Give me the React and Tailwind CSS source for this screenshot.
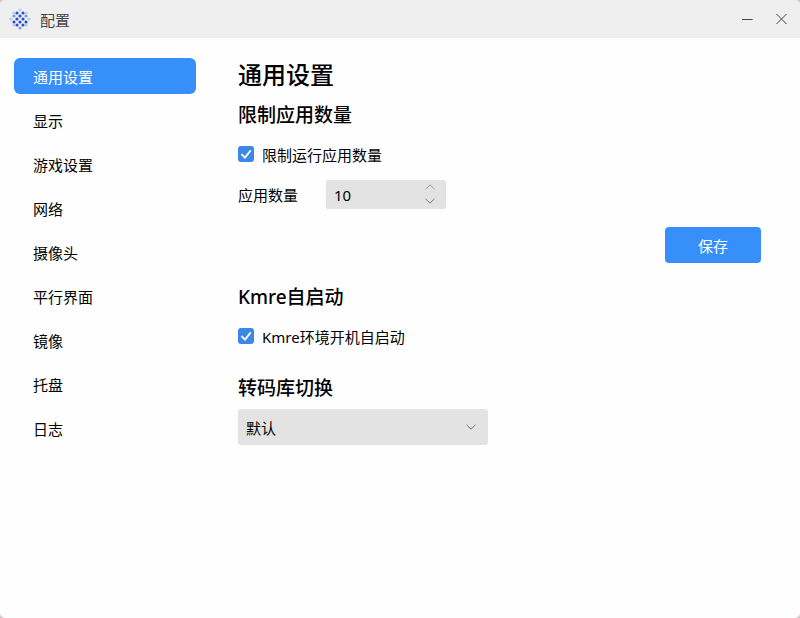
const MENU = ['通用设置', '显示', '游戏设置', '网络', '摄像头', '平行界面', '镜像', '托盘', '日志']

const LIGHT = '#b4cdf3'
const MID = '#7d9de6'
const DARK = '#2b4fc4'

const DOTS = [
  [11, 2, LIGHT],
  [8, 5, DARK], [14, 5, DARK],
  [5, 8, MID], [11, 8, DARK], [17, 8, MID],
  [2, 11, LIGHT], [8, 11, DARK], [14, 11, DARK], [20, 11, LIGHT],
  [5, 14, DARK], [11, 14, DARK], [17, 14, DARK],
  [8, 17, DARK], [14, 17, DARK],
  [11, 20, MID],
  [5, 5, LIGHT], [17, 5, LIGHT], [5, 17, LIGHT], [17, 17, LIGHT],
]

function Logo() {
  return (
    <svg width="22" height="22" viewBox="0 0 22 22">
      {DOTS.map(([x, y, fill]) => (
        <circle key={`${x}-${y}`} cx={x} cy={y} r="1.6" fill={fill} />
      ))}
    </svg>
  )
}

function Chevron({ up = false, color = '#777' }) {
  return (
    <svg width="10" height="6" viewBox="0 0 10 6" fill="none" stroke={color}>
      <path d={up ? 'M0.5 5.2 5 0.8 9.5 5.2' : 'M0.5 0.8 5 5.2 9.5 0.8'} />
    </svg>
  )
}

function CheckRow({ label }) {
  return (
    <label className="flex h-6 items-center gap-2">
      <span className="mb-[3px] flex size-4 items-center justify-center rounded-[3px] bg-[#3d87e6]">
        <svg width="16" height="16" viewBox="0 0 16 16" fill="none" stroke="#fff" strokeWidth="1.8">
          <path d="M3.5 8.2 7 11.6 12.7 4.4" />
        </svg>
      </span>
      {label}
    </label>
  )
}

export default function App() {
  return (
    <div className="h-[618px] w-[800px] bg-[#d3c3c5]">
      <div className="flex h-full flex-col overflow-hidden rounded-[5px] bg-[#fefefe] font-['Noto_Sans','Noto_Sans_CJK_SC',sans-serif] text-[15px] leading-6 text-black">
        <header className="flex h-[38px] shrink-0 items-center bg-[#efefef] pl-[9px] pr-[13px]">
          <Logo />
          <span className="ml-[9px] pt-0.5 text-[#444]">配置</span>
          <svg className="ml-auto" width="46" height="12" viewBox="0 0 46 12" fill="none" stroke="#444">
            <path d="M1 6.5h10.5M35.5 1l10 10M45.5 1l-10 10" />
          </svg>
        </header>

        <div className="flex flex-1">
          <nav className="flex w-[196px] flex-col gap-2 pl-[14px] pt-5">
            {MENU.map((item, i) => (
              <a
                key={item}
                className={i === 0
                  ? 'flex h-9 items-center rounded-md bg-[#3790fa] pl-[19px] pt-0.5 text-white'
                  : 'flex h-9 items-center pl-[19px] pt-0.5'}
              >
                {item}
              </a>
            ))}
          </nav>

          <main className="flex flex-1 flex-col pl-[42px] pr-[39px] pt-[19px]">
            <h1 className="text-2xl leading-9 font-medium">通用设置</h1>
            <h2 className="mt-2 text-[19px] leading-7 font-medium">限制应用数量</h2>
            <div className="mt-[14px]">
              <CheckRow label="限制运行应用数量" />
            </div>
            <div className="mt-[13px] flex h-[29px] items-center">
              <span className="w-[88px]">应用数量</span>
              <div className="flex h-full w-[120px] items-center justify-between rounded-[2px] bg-[#e3e3e3] pl-2 pr-[11px]">
                10
                <div className="mb-0.5 flex flex-col gap-2">
                  <Chevron up color="#999" />
                  <Chevron />
                </div>
              </div>
            </div>
            <button className="mt-[18px] h-9 w-24 self-end rounded bg-[#3790fa] pt-0.5 text-white">保存</button>

            <h2 className="mt-5 text-[19px] leading-7 font-medium">Kmre自启动</h2>
            <div className="mt-[14px]">
              <CheckRow label="Kmre环境开机自启动" />
            </div>
            <h2 className="mt-[25px] text-[19px] leading-7 font-medium">转码库切换</h2>
            <div className="mt-[7px] flex h-9 w-[250px] items-center justify-between rounded-[3px] bg-[#e3e3e3] pl-2 pr-3">
              <span className="pt-0.5">默认</span>
              <Chevron />
            </div>
          </main>
        </div>
      </div>
    </div>
  )
}
